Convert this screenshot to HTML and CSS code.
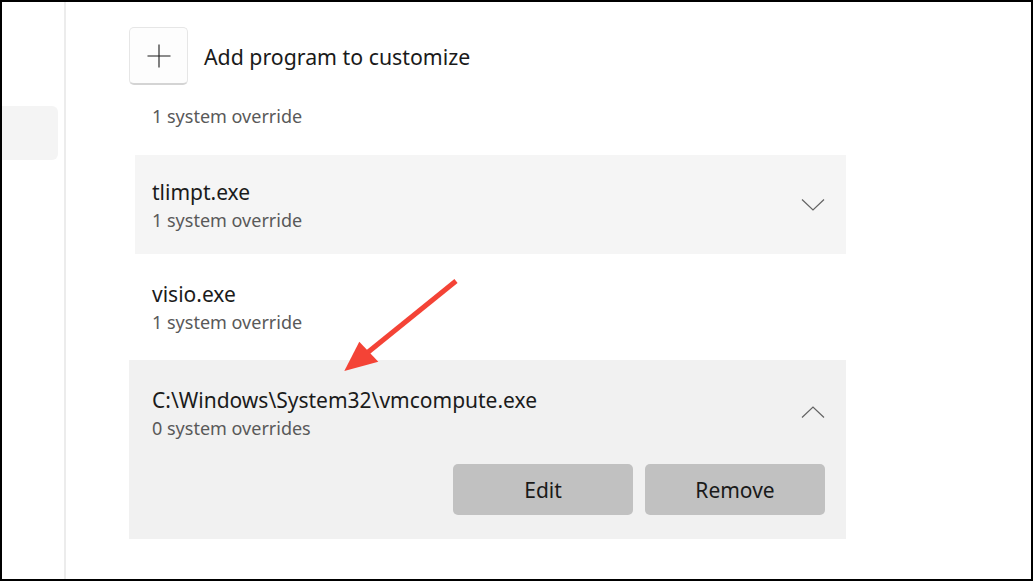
FILE: index.html
```html
<!DOCTYPE html>
<html lang="en">
<head>
<meta charset="utf-8">
<title>Graphics settings</title>
<link rel="stylesheet" href="styles.css">
</head>
<body>
<div class="window">
  <aside class="sidebar">
    <div class="side-item"></div>
  </aside>
  <div class="divider"></div>
  <main class="main">
    <div class="content">
      <div class="add-row">
        <div class="add-btn">
          <svg width="24" height="24" viewBox="0 0 24 24"><path d="M12 0.5V23.5M0.5 12H23.5" stroke="#1b1b1b" stroke-width="1.1" fill="none"/></svg>
        </div>
        <span class="add-label">Add program to customize</span>
      </div>
      <div class="prev-sub">1 system override</div>
      <div class="list">
        <div class="row shaded">
          <div class="row-text">
            <div class="title">tlimpt.exe</div>
            <div class="sub">1 system override</div>
          </div>
          <svg class="chev" width="24" height="13" viewBox="0 0 24 13"><polyline points="1,1.5 12,12 23,1.5" fill="none" stroke="#636363" stroke-width="1.2"/></svg>
        </div>
        <div class="row">
          <div class="row-text">
            <div class="title">visio.exe</div>
            <div class="sub">1 system override</div>
          </div>
        </div>
        <div class="expanded">
          <div class="exp-head">
            <div class="row-text">
              <div class="title">C:\Windows\System32\vmcompute.exe</div>
              <div class="sub">0 system overrides</div>
            </div>
            <svg class="chev" width="24" height="13" viewBox="0 0 24 13"><polyline points="1,11.5 12,1 23,11.5" fill="none" stroke="#636363" stroke-width="1.2"/></svg>
          </div>
          <div class="actions">
            <div class="btn">Edit</div>
            <div class="btn">Remove</div>
          </div>
        </div>
      </div>
    </div>
  </main>
</div>
<svg class="annotation" width="1033" height="581" viewBox="0 0 1033 581">
  <line x1="456" y1="281" x2="367" y2="353" stroke="#f44336" stroke-width="5"/>
  <polygon points="344.3,371 359.3,341.7 378.3,361.7" fill="#f44336"/>
</svg>
</body>
</html>
```
FILE: styles.css
```css
html, body {
  margin: 0;
  padding: 0;
}
body {
  width: 1033px;
  height: 581px;
  box-sizing: border-box;
  border: 2px solid #000;
  background: #fff;
  position: relative;
  overflow: hidden;
  font-family: "Noto Sans", "Open Sans", sans-serif;
  color: #1b1b1b;
}
.window {
  display: flex;
  height: 100%;
}
.sidebar {
  width: 62px;
  flex: none;
  padding-top: 104px;
  box-sizing: border-box;
}
.side-item {
  width: 56px;
  height: 54px;
  background: #f4f4f4;
  border-radius: 0 6px 6px 0;
}
.divider {
  width: 2px;
  flex: none;
  background: #ececec;
}
.main {
  flex: 1;
  padding: 25px 0 0 63px;
}
.content {
  width: 717px;
}
.add-row {
  display: flex;
  align-items: center;
  gap: 16px;
}
.add-btn {
  width: 59px;
  height: 58px;
  box-sizing: border-box;
  border: 1px solid #e6e6e6;
  border-bottom: 2px solid #d4d4d4;
  border-radius: 5px;
  background: #fdfdfd;
  display: flex;
  align-items: center;
  justify-content: center;
}
.add-label {
  font-size: 21.3px;
  color: #1a1a1a;
}
.prev-sub {
  height: 28px;
  line-height: 28px;
  font-size: 18px;
  color: #595959;
  margin: 17px 0 25px 23px;
}
.list {
  display: flex;
  flex-direction: column;
  gap: 4px;
}
.row {
  height: 98.5px;
  box-sizing: border-box;
  display: flex;
  justify-content: space-between;
  align-items: center;
  padding: 0 21px 0 23px;
}
.row.shaded {
  background: #f5f5f5;
  margin-left: 6px;
  padding-left: 17px;
}
.row-text {
  align-self: flex-start;
  padding-top: 22.8px;
}
.title {
  font-size: 21px;
  line-height: 28px;
  color: #1b1b1b;
}
.sub {
  font-size: 18px;
  line-height: 28px;
  color: #595959;
}
.chev {
  flex: none;
}
.expanded {
  background: #f1f1f1;
  padding: 0 21px 24px 23px;
}
.exp-head {
  height: 104px;
  display: flex;
  justify-content: space-between;
  align-items: center;
}
.exp-head .row-text {
  padding-top: 26.2px;
}
.actions {
  display: flex;
  justify-content: flex-end;
  gap: 12px;
}
.btn {
  width: 180px;
  height: 51px;
  border-radius: 5px;
  background: #c1c1c1;
  font-size: 21px;
  color: #1a1a1a;
  display: flex;
  align-items: center;
  justify-content: center;
}
.annotation {
  position: absolute;
  left: -2px;
  top: -2px;
  pointer-events: none;
}
```
